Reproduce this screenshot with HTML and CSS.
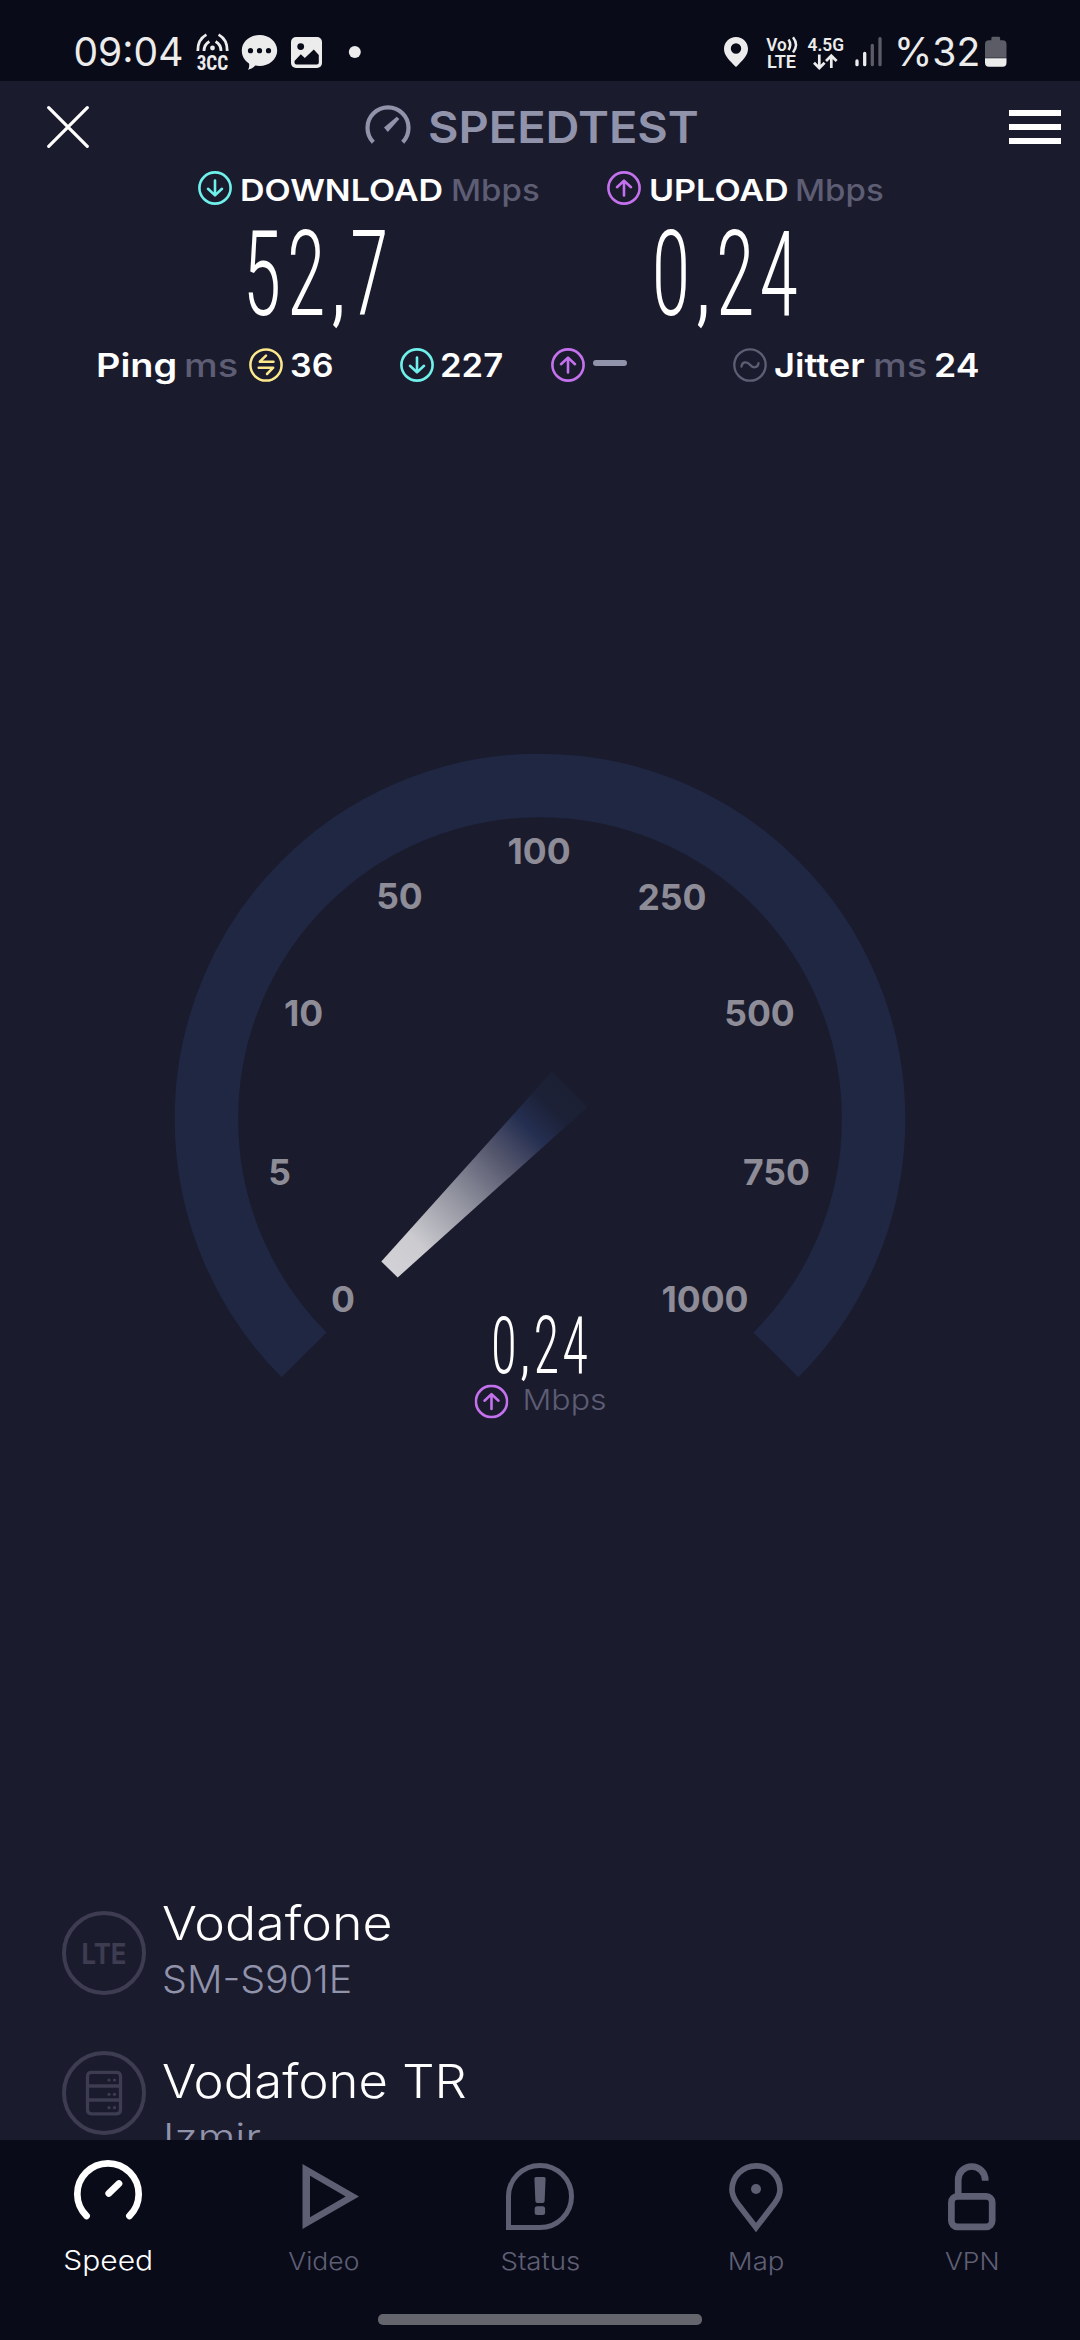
FILE: index.html
```
<!DOCTYPE html>
<html lang="en">
<head>
<meta charset="utf-8">
<title>Speedtest</title>
<link rel="stylesheet" href="styles.css">
</head>
<body>
<svg width="0" height="0" class="defs">
  <symbol id="down" viewBox="0 0 34 34"><g fill="none" stroke="currentColor" stroke-width="2.6" stroke-linecap="round" stroke-linejoin="round"><circle cx="17" cy="17" r="15.6"/><path d="M17 9.5V24M10 17.8l7 6.6 7-6.6"/></g></symbol>
  <symbol id="up" viewBox="0 0 34 34"><g fill="none" stroke="currentColor" stroke-width="2.6" stroke-linecap="round" stroke-linejoin="round"><circle cx="17" cy="17" r="15.6"/><path d="M17 24.5V10M10 16.2l7-6.6 7 6.6"/></g></symbol>
</svg>

<div class="screen">
  <header class="statusbar">
    <span class="clock">09:04</span>
    <svg class="status-left" width="170" height="44" viewBox="194 30 170 44" fill="#ececec">
      <g fill="none" stroke="#ececec" stroke-width="2.8">
        <path d="M197.8 51c-.2-7 2.5-13 8.600-16.400M227.200 51c.2-7-2.500-13-8.600-16.400M204 51c0-4 1.600-7.500 5.400-9.600M221 51c0-4-1.600-7.500-5.400-9.600"/>
      </g>
      <circle cx="212.500" cy="48" r="2.400"/>
      <text class="tiny" x="196.700" y="70" textLength="31.500" lengthAdjust="spacingAndGlyphs">3CC</text>
      <path d="M259.500 35c9.800 0 17.700 6.800 17.700 15.500S269 66 259.500 66c-1.500 0-3-.2-4.200-.5-2 2-4.300 3.600-7.300 4.300 1.200-1.900 1.500-3.900 1-6.300-4.500-2.800-7.200-7.500-7.200-13C241.800 41.800 249.700 35 259.500 35z"/>
      <g fill="#090b19"><circle cx="250.500" cy="50.700" r="2.600"/><circle cx="259.500" cy="50.700" r="2.600"/><circle cx="268.500" cy="50.700" r="2.600"/></g>
      <rect x="291" y="37" width="31" height="31" rx="5"/>
      <circle cx="300.700" cy="46.600" r="3.400" fill="#090b19"/>
      <path d="M294.500 61l6.300-6.800 4 3.800 9-8.500 5 5.500v7.500q0 2-2 2h-20.300q-2 0-2-2z" fill="#090b19"/>
      <circle cx="354.800" cy="52" r="6"/>
    </svg>
    <svg class="status-right" width="170" height="44" viewBox="720 30 170 44" fill="#ececec">
      <path fill-rule="evenodd" d="M736 37c6.800 0 12 5.300 12 12 0 6.500-5.500 11.500-12 18-6.500-6.500-12-11.500-12-18 0-6.700 5.200-12 12-12zm0 6.300a5.200 5.200 0 1 0 0 10.400 5.200 5.200 0 0 0 0-10.400z"/>
      <text class="tiny vo" x="766.300" y="50.500" textLength="20.500" lengthAdjust="spacingAndGlyphs">Vo</text>
      <path d="M788.500 39.500q3.400 5 0 10.500M793 37.300q6 7.500 0 15.200" fill="none" stroke="#ececec" stroke-width="2.500"/>
      <text class="tiny vo" x="767" y="67.500" textLength="29" lengthAdjust="spacingAndGlyphs">LTE</text>
      <text class="tiny vo" x="807.500" y="51" textLength="36.500" lengthAdjust="spacingAndGlyphs">4.5G</text>
      <path d="M819.300 54.500v13M814 62.700l5.300 5.300 5.300-5.300M831.300 68v-12M826 61l5.300-5.300 5.300 5.300" fill="none" stroke="#ececec" stroke-width="2.700"/>
      <g stroke-width="3.300" stroke-linecap="round"><path d="M857 61v3.700M864.700 53.300v11.400" stroke="#ececec"/><path d="M872.300 45.500v19.200M880 38.700v26" stroke="#5c5c66"/></g>
    </svg>
    <span class="percent">%32</span>
    <svg class="battery" width="22" height="32" viewBox="0 0 22 32">
      <path d="M6.500 4V2q0-1.500 1.500-1.500h6q1.500 0 1.500 1.500v2H18q4 0 4 4v14H0V8q0-4 4-4z" fill="#5c5c66"/>
      <path d="M0 22.500h22V27q0 4-4 4H4q-4 0-4-4z" fill="#ececec"/>
    </svg>
  </header>

  <main class="content">
    <div class="topbar">
      <svg width="42" height="42" viewBox="0 0 42 42"><path d="M1.700 1.700l38.600 38.600M40.300 1.700L1.700 40.300" stroke="#fff" stroke-width="3.200" stroke-linecap="round"/></svg>
      <div class="brand">
        <svg width="46" height="46" viewBox="365 103 46 46"><path d="M373.300 141.200a20.500 20.500 0 1 1 29.400 0" fill="none" stroke="#9193ab" stroke-width="4.200"/><path d="M384 126.500L396.700 115.700l2.600 2.200L387.800 131z" fill="#9193ab"/></svg>
        <span class="fit brand-name">SPEEDTEST</span>
      </div>
      <div class="menu"><i></i><i></i><i></i></div>
    </div>

    <section class="results">
      <div class="result">
        <div class="label">
          <svg class="ic cyan"><use href="#down"/></svg>
          <span class="fit t-down">DOWNLOAD</span><span class="fit t-unit">Mbps</span>
        </div>
        <svg class="figure" width="260" height="135" viewBox="198 208 260 135"><text class="digits" transform="translate(242.500 315) scale(.67 1)" x="0 66 134 160">52<tspan class="comma">,</tspan>7</text></svg>
      </div>
      <div class="result">
        <div class="label">
          <svg class="ic violet"><use href="#up"/></svg>
          <span class="fit t-up">UPLOAD</span><span class="fit t-unit u2">Mbps</span>
        </div>
        <svg class="figure" width="260" height="135" viewBox="607 208 260 135"><text class="digits" transform="translate(651.500 315) scale(.67 1)" x="0 68 96 161">0<tspan class="comma">,</tspan>24</text></svg>
      </div>
    </section>

    <section class="latency">
      <span class="fit p-name">Ping</span><span class="fit p-ms">ms</span>
      <svg class="ic yellow" viewBox="0 0 34 34"><g fill="none" stroke="currentColor" stroke-width="2.500" stroke-linecap="round" stroke-linejoin="round"><circle cx="17" cy="17" r="15.600"/><path d="M24.500 13.700H10.800L17 7.700M9.700 19.700h14.500L18 26"/></g></svg>
      <span class="fit p-36">36</span>
      <svg class="ic cyan p-down"><use href="#down"/></svg>
      <span class="fit p-227">227</span>
      <svg class="ic violet p-up"><use href="#up"/></svg>
      <i class="dash"></i>
      <svg class="ic grey p-jit" viewBox="0 0 34 34"><g fill="none" stroke="currentColor" stroke-width="2.300" stroke-linecap="round"><circle cx="17" cy="17" r="15.700"/><path d="M8.500 18.500c.5-5 5.500-5.500 8.500-1.700s8 3.200 8.500-1.700"/></g></svg>
      <span class="fit p-jitter">Jitter</span><span class="fit p-ms">ms</span><span class="fit p-24">24</span>
    </section>

    <svg class="gauge" width="740" height="680" viewBox="170 740 740 680">
      <defs><linearGradient id="needle" gradientUnits="userSpaceOnUse" x1="389.500" y1="1269.500" x2="569.400" y2="1089.600">
        <stop offset="0" stop-color="#d2d1d6"/><stop offset=".15" stop-color="#cbcbd0"/><stop offset=".4" stop-color="#8f909d"/><stop offset=".62" stop-color="#53556c"/><stop offset=".78" stop-color="#242e50"/><stop offset=".9" stop-color="#1c2137"/><stop offset="1" stop-color="#1b2034"/>
      </linearGradient></defs>
      <path d="M304.100 1354.900A333.600 333.600 0 1 1 775.900 1354.900" fill="none" stroke="#1f2742" stroke-width="63.500"/>
      <path d="M381.300 1261.500L551.700 1071.700 587 1107.400 397.700 1277.500z" fill="url(#needle)"/>
      <g class="ticks">
        <text x="343" y="1312">0</text><text x="279.500" y="1185">5</text><text x="303.500" y="1026">10</text>
        <text x="399.500" y="908.500">50</text><text x="539" y="864">100</text><text x="672" y="910">250</text>
        <text x="759.500" y="1026">500</text><text x="776.500" y="1185">750</text><text x="705" y="1312">1000</text>
      </g>
      <text class="digits small" transform="translate(491 1373) scale(.443 .661)" x="0 68 96 161">0<tspan class="comma">,</tspan>24</text>
      <use href="#up" x="474.500" y="1384.500" width="34" height="34" color="#c471ee"/>
      <text class="gauge-unit" x="522.500" y="1410" textLength="84" lengthAdjust="spacingAndGlyphs">Mbps</text>
    </svg>

    <section class="network">
      <div class="network-icons">
        <svg width="84" height="84" viewBox="62 1911 84 84"><circle cx="104" cy="1953" r="40" fill="none" stroke="#3d3c50" stroke-width="4"/><text class="lte" x="81.500" y="1963.500" textLength="45" lengthAdjust="spacingAndGlyphs">LTE</text></svg>
        <svg width="84" height="84" viewBox="62 2051 84 84"><g fill="none" stroke="#3d3c50"><circle cx="104" cy="2093" r="40" stroke-width="4"/><path d="M91.500 2072.300h25q4 0 4 4v33.500q0 4-4 4h-25q-4 0-4-4v-33.500q0-4 4-4zM87.500 2086h33M87.500 2100h33" stroke-width="3.300"/></g><g fill="#3d3c50"><circle cx="109" cy="2080" r="1.600"/><circle cx="114.500" cy="2080" r="1.600"/><circle cx="109" cy="2094.300" r="1.600"/><circle cx="114.500" cy="2094.300" r="1.600"/><circle cx="109" cy="2107.700" r="1.600"/><circle cx="114.500" cy="2107.700" r="1.600"/></g></svg>
      </div>
      <div class="network-text">
        <div class="entry"><span class="fit name n1">Vodafone</span><span class="fit sub s1">SM-S901E</span></div>
        <div class="entry"><span class="fit name n2">Vodafone TR</span><span class="fit sub s2">Izmir</span></div>
      </div>
    </section>
  </main>

  <nav class="tabs">
    <div class="tab active">
      <svg width="76" height="76" viewBox="70 2158 76 76" fill="none" stroke="currentColor" stroke-width="6.700" stroke-linecap="round"><path d="M86.600 2216a30.700 30.700 0 1 1 42.800 0M108.700 2193.500l10.300-10"/></svg>
      <span class="fit tab-speed">Speed</span>
    </div>
    <div class="tab">
      <svg width="76" height="76" viewBox="286 2158 76 76" fill="currentColor"><path fill-rule="evenodd" d="M302.500 2164L359 2196.500 302.500 2229zM310 2175.700V2217.300L345.700 2196.500z"/></svg>
      <span class="fit tab-video">Video</span>
    </div>
    <div class="tab">
      <svg width="76" height="76" viewBox="502 2158 76 76" fill="currentColor"><path d="M508.500 2227.500V2196.500a31.500 31 0 1 1 31.500 31z" fill="none" stroke="currentColor" stroke-width="5"/><path d="M536 2177h8q1.700 0 1.600 1.700l-1 22.600q-.1 1.700-1.800 1.700h-5.600q-1.700 0-1.800-1.700l-1-22.600q-.1-1.700 1.600-1.700z"/><rect x="534.700" y="2206.300" width="10.400" height="8.700" rx="2.500"/></svg>
      <span class="fit tab-status">Status</span>
    </div>
    <div class="tab">
      <svg width="76" height="76" viewBox="718 2158 76 76" fill="currentColor"><path d="M756 2227.500l-18.700-24.300c-3-4-5.300-8.400-5.300-13.700a24 23.700 0 0 1 48 0c0 5.300-2.300 9.700-5.300 13.700z" fill="none" stroke="currentColor" stroke-width="5.700"/><circle cx="756" cy="2189" r="5"/></svg>
      <span class="fit tab-map">Map</span>
    </div>
    <div class="tab">
      <svg width="76" height="76" viewBox="934 2158 76 76" fill="none" stroke="currentColor" stroke-width="6.700"><rect x="951.400" y="2196.400" width="40.800" height="30.400" rx="6"/><path d="M958.200 2195v-15a13.500 13.500 0 0 1 27 0v.8"/></svg>
      <span class="fit tab-vpn">VPN</span>
    </div>
    <i class="home"></i>
  </nav>
</div>
</body>
</html>
```
FILE: styles.css
```
* { box-sizing: border-box; }
body { margin: 0; background: #1b1b2e; font-family: Inter, "Open Sans", sans-serif; color: #fff; }
svg { display: block; flex: none; }
.defs { position: absolute; }
.screen { width: 1080px; height: 2340px; display: flex; flex-direction: column; overflow: hidden; }

.fit { display: block; flex: none; white-space: nowrap; transform: scaleX(var(--s)); transform-origin: 0 50%; }

.statusbar { flex: none; height: 81px; background: #090b19; display: flex; align-items: center; padding: 23px 0 0 73.500px; color: #ececec; font-size: 39px; line-height: 58px; }
.clock { width: 120.500px; font-weight: 400; }
.status-left { margin-right: 356px; }
.percent { width: 91px; margin-left: 4px; font-weight: 400; }
.battery { width: 21.500px; }
.tiny { font: 700 21px "Roboto Condensed", Roboto, sans-serif; }
.vo { font-size: 18px; font-family: Roboto, sans-serif; font-weight: 600; }

.content { height: 2059px; flex: none; overflow: hidden; display: flex; flex-direction: column; }
.topbar { flex: none; height: 91px; display: flex; align-items: center; padding-left: 47px; }
.brand { display: flex; align-items: center; width: 644px; margin-left: 276px; color: #9193ab; }
.brand-name { --s: 1.066; margin-left: 16.500px; font-size: 44px; font-weight: 600; }
.menu { width: 52px; height: 34px; display: flex; flex-direction: column; justify-content: space-between; }
.menu i { height: 6px; background: #fff; }

.results { flex: none; display: flex; padding-left: 198px; }
.result { width: 409px; }
.label { height: 36px; display: flex; align-items: center; font-size: 30px; font-weight: 600; }
.label .ic { margin-bottom: 4px; }
.ic { width: 34px; height: 34px; }
.cyan { color: #6ff0ea; }
.violet { color: #c471ee; }
.yellow { color: #fbe98b; margin-left: 12px; }
.grey { color: #5d5d73; }
.t-down { --s: 1.134; width: 202px; margin-left: 8px; }
.t-up { --s: 1.137; width: 139px; margin-left: 8px; }
.t-unit { --s: 1.1; margin-left: 9px; font-weight: 500; color: #5d5d73; }
.u2 { margin-left: 7px; }
.digits { font: 300 119.500px "Roboto Condensed", Roboto, sans-serif; fill: #fff; }
.digits.small { font-weight: 270; }
.comma { font-size: 92px; font-weight: 400; }

.latency { flex: none; height: 44px; display: flex; align-items: center; padding-left: 96px; font-size: 33px; font-weight: 600; }
.p-name { --s: 1.147; width: 80px; }
.p-ms { --s: 1.15; width: 53px; margin-left: 8px; font-weight: 500; color: #5d5d73; }
.p-36 { --s: 1.03; width: 43px; margin-left: 7px; }
.p-down { margin-left: 67px; }
.p-227 { --s: 1.05; width: 62px; margin-left: 6px; }
.p-up { margin-left: 49px; }
.dash { width: 34px; height: 6px; margin-left: 8px; margin-bottom: 4px; border-radius: 3px; background: #9193ab; }
.p-jit { margin-left: 106px; }
.p-jitter { --s: 1.1; width: 91px; margin-left: 7px; }
.p-24 { --s: 1.08; margin-left: 8px; }

.gauge { margin: 353px auto 0; }
.ticks { font: 700 35.500px Inter, sans-serif; fill: #8d8c97; text-anchor: middle; }
.gauge-unit { font: 300 29px Inter, sans-serif; fill: #5d5d73; }

.network { flex: none; display: flex; margin-top: 475px; padding-left: 62px; }
.network-icons { display: flex; flex-direction: column; gap: 56px; padding-top: 16px; }
.lte { font: 700 29px Inter, sans-serif; fill: #3d3c50; }
.network-text { margin-left: 16px; }
.entry { height: 158px; }
.name { font-size: 46.500px; font-weight: 350; line-height: 56px; }
.sub { font-size: 38px; font-weight: 300; line-height: 57px; color: #9193ab; }
.n1 { --s: 1.115; } .n2 { --s: 1.092; } .s1 { --s: 1.037; } .s2 { --s: 1.135; margin-left: 1px; }

.tabs { position: relative; flex: none; height: 200px; background: #090b19; display: flex; padding-top: 18px; }
.tab { width: 216px; display: flex; flex-direction: column; align-items: center; color: #5f5f74; font-size: 24.500px; font-weight: 300; line-height: 54px; }
.tab .fit { transform-origin: 50% 50%; }
.tab svg { width: 76px; }
.tab.active { color: #fff; font-size: 27.500px; line-height: 52px; font-weight: 350; }
.tab-speed { --s: 1.09; } .tab-video { --s: 1.08; } .tab-status { --s: 1.13; } .tab-map { --s: 1.125; } .tab-vpn { --s: 1.08; }
.home { position: absolute; left: 378px; top: 174px; width: 324px; height: 11px; border-radius: 5px; background: #65656d; }
```
